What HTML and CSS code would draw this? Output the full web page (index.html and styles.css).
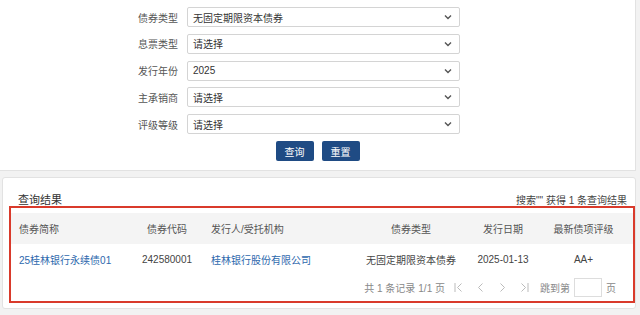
FILE: index.html
```html
<!DOCTYPE html>
<html lang="zh-CN">
  <head>
    <meta charset="UTF-8" />
    <meta name="viewport" content="width=device-width, initial-scale=1.0" />
    <title>债券查询</title>
    <link rel="stylesheet" href="styles.css">
  </head>
  <body>
    <div class="card search-card">
      <div class="form-grid">
        <label class="form-label">债券类型</label>
        <div class="select-box"><span>无固定期限资本债券</span><svg class="chev" width="8" height="6" viewBox="0 0 8 6"><path d="M1 1.5 L4 4.5 L7 1.5" fill="none" stroke="#555" stroke-width="1.4"/></svg></div>
        <label class="form-label">息票类型</label>
        <div class="select-box"><span>请选择</span><svg class="chev" width="8" height="6" viewBox="0 0 8 6"><path d="M1 1.5 L4 4.5 L7 1.5" fill="none" stroke="#555" stroke-width="1.4"/></svg></div>
        <label class="form-label">发行年份</label>
        <div class="select-box"><span>2025</span><svg class="chev" width="8" height="6" viewBox="0 0 8 6"><path d="M1 1.5 L4 4.5 L7 1.5" fill="none" stroke="#555" stroke-width="1.4"/></svg></div>
        <label class="form-label">主承销商</label>
        <div class="select-box"><span>请选择</span><svg class="chev" width="8" height="6" viewBox="0 0 8 6"><path d="M1 1.5 L4 4.5 L7 1.5" fill="none" stroke="#555" stroke-width="1.4"/></svg></div>
        <label class="form-label">评级等级</label>
        <div class="select-box"><span>请选择</span><svg class="chev" width="8" height="6" viewBox="0 0 8 6"><path d="M1 1.5 L4 4.5 L7 1.5" fill="none" stroke="#555" stroke-width="1.4"/></svg></div>
      </div>
      <div class="button-row">
        <button type="button" class="btn">查询</button>
        <button type="button" class="btn">重置</button>
      </div>
    </div>

    <div class="card result-card">
      <div class="result-head">
        <span class="result-title">查询结果</span>
        <span class="result-count">搜索"" 获得 1 条查询结果</span>
      </div>
      <div class="result-box">
        <table class="result-table">
          <colgroup>
            <col style="width: 120px">
            <col style="width: 72px">
            <col style="width: 158px">
            <col style="width: 100px">
            <col style="width: 84px">
            <col style="width: 88px">
          </colgroup>
          <thead>
            <tr>
              <th class="left">债券简称</th>
              <th>债券代码</th>
              <th class="left">发行人/受托机构</th>
              <th>债券类型</th>
              <th>发行日期</th>
              <th class="last">最新债项评级</th>
            </tr>
          </thead>
          <tbody>
            <tr>
              <td class="left"><a href="#">25桂林银行永续债01</a></td>
              <td>242580001</td>
              <td class="left"><a href="#">桂林银行股份有限公司</a></td>
              <td>无固定期限资本债券</td>
              <td>2025-01-13</td>
              <td class="last">AA+</td>
            </tr>
          </tbody>
        </table>
        <div class="pager">
          <span>共 1 条记录</span>
          <span>1/1 页</span>
          <span class="pager-icons">
            <svg width="9" height="11" viewBox="0 0 9 11"><path d="M1 1 V10 M7.5 1.5 L3.5 5.5 L7.5 9.5" fill="none" stroke="#bbb" stroke-width="1"/></svg>
            <svg width="9" height="11" viewBox="0 0 9 11"><path d="M6.5 1.5 L2.5 5.5 L6.5 9.5" fill="none" stroke="#bbb" stroke-width="1"/></svg>
            <svg width="9" height="11" viewBox="0 0 9 11"><path d="M2.5 1.5 L6.5 5.5 L2.5 9.5" fill="none" stroke="#bbb" stroke-width="1"/></svg>
            <svg width="9" height="11" viewBox="0 0 9 11"><path d="M1.5 1.5 L5.5 5.5 L1.5 9.5 M8 1 V10" fill="none" stroke="#bbb" stroke-width="1"/></svg>
          </span>
          <span>跳到第</span>
          <input class="page-input" type="text">
          <span>页</span>
        </div>
      </div>
    </div>
  </body>
</html>
```

FILE: styles.css
```css
body {
  margin: 0;
  background-color: #f2f2f2;
  font-family: "Liberation Sans", Arial, "Noto Sans CJK SC", sans-serif;
  font-size: 10px;
  color: #333;
}

.card {
  background-color: #fff;
  border: 1px solid #e2e2e2;
}

/* 查询条件 */
.search-card {
  width: 636px;
  border-top: none;
  border-left: none;
  padding: 7px 0 9px;
  box-sizing: border-box;
}

.form-grid {
  display: grid;
  grid-template-columns: 178px 273px;
  grid-auto-rows: 20px;
  column-gap: 9px;
  row-gap: 6.8px;
  align-items: center;
}

.form-label {
  text-align: right;
  color: #555;
}

.select-box {
  height: 20px;
  border: 1px solid #d4d4d4;
  border-radius: 2px;
  box-sizing: border-box;
  display: flex;
  align-items: center;
  justify-content: space-between;
  padding: 0 7px 0 5px;
  color: #333;
}

.button-row {
  display: flex;
  justify-content: center;
  gap: 8px;
  margin-top: 7px;
}

.btn {
  background-color: #1f4b84;
  color: #fff;
  border: none;
  border-radius: 2px;
  height: 20px;
  padding: 0 9px;
  font-family: inherit;
  font-size: 10px;
}

/* 查询结果 */
.result-card {
  margin: 6px 0 0 2px;
  width: 634px;
  box-sizing: border-box;
  border-radius: 3px;
  padding: 14px 0 5px 6px;
}

.result-head {
  display: flex;
  justify-content: space-between;
  align-items: center;
  padding: 0 8px 0 9px;
  height: 14px;
}

.result-title {
  font-size: 11px;
}

.result-count {
  color: #444;
}

.result-box {
  border: 2px solid #d93a2b;
  width: 626px;
  box-sizing: border-box;
  padding-top: 5px;
  padding-bottom: 4px;
}

.result-table {
  border-collapse: collapse;
  table-layout: fixed;
  width: 622px;
}

.result-table th {
  background-color: #f4f4f4;
  color: #555;
  font-weight: normal;
  height: 29px;
  text-align: center;
}

.result-table td {
  height: 28px;
  text-align: center;
  color: #444;
}

.result-table .left {
  text-align: left;
  padding-left: 8px;
}

.result-table .last {
  padding-right: 12px;
}

.result-table a {
  color: #2d68ad;
  text-decoration: none;
}

.pager {
  display: flex;
  justify-content: flex-end;
  align-items: center;
  gap: 3px;
  color: #888;
  padding: 3px 17px 0 0;
  height: 20px;
}

.pager-icons {
  display: flex;
  gap: 13px;
  margin: 0 8px 0 6px;
}

.page-input {
  width: 28px;
  height: 19px;
  box-sizing: border-box;
  border: 1px solid #ddd;
  padding: 0;
  margin: 0 1px;
}
```
